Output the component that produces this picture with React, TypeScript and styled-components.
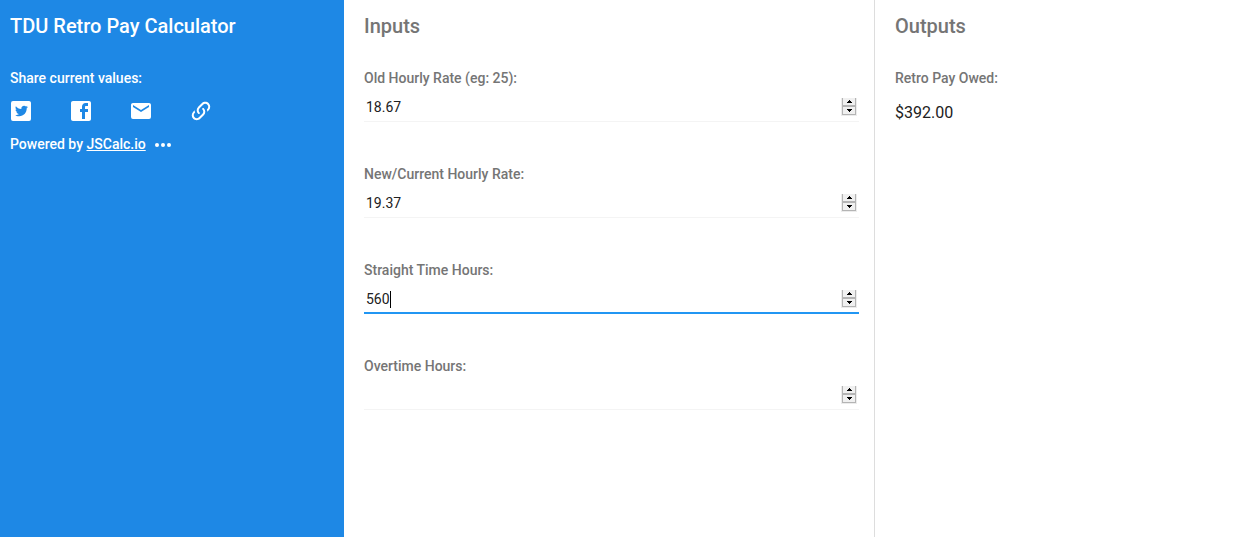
import React, { useId, useState } from "react";
import styled, { createGlobalStyle } from "styled-components";

const GlobalStyle = createGlobalStyle`
  *, *::before, *::after { box-sizing: border-box; }
  body {
    margin: 0;
    background: #fff;
    color: #212121;
    font-family: Roboto, "Liberation Sans", sans-serif;
    font-size: 14px;
    line-height: 20px;
  }
`;

const Page = styled.main`
  display: grid;
  grid-template-columns: 344fr 531fr 374fr;
  min-height: 100vh;
`;

const Sidebar = styled.aside`
  padding: 10px;
  background: #1e88e5;
  color: #fff;
`;

const InputsPanel = styled.section`
  padding: 10px 15px 10px 20px;
  border-right: 1px solid #ddd;
`;

const OutputsPanel = styled.section`
  padding: 10px 20px;
`;

const Heading = styled.h2`
  margin: 0 0 26px;
  font-size: 20px;
  font-weight: 500;
  line-height: 32px;
  color: #757575;
`;

const Title = styled(Heading).attrs({ as: "h1" })`
  color: inherit;
`;

const Strong = styled.p`
  margin: 0;
  font-weight: 500;
`;

const ShareRow = styled.div`
  display: flex;
  gap: 36px;
  margin: 11px 0 9px -1px;
`;

const IconButton = styled.button`
  display: flex;
  padding: 0;
  border: 0;
  background: none;
  color: inherit;
  cursor: pointer;

  svg {
    width: 24px;
    height: 24px;
    fill: currentColor;
  }
`;

const Footer = styled.div`
  display: flex;
  align-items: center;
  gap: 6px;
  font-weight: 500;
`;

const Link = styled.a`
  color: inherit;
`;

const Fields = styled.form`
  display: grid;
  gap: 42px;
`;

const Label = styled.label`
  display: block;
  font-weight: 500;
  color: #757575;
`;

const Control = styled.div<{ $focused: boolean }>`
  position: relative;
  display: flex;
  align-items: center;
  height: 34px;
  padding: 6px 2px ${(p) => (p.$focused ? "0" : "1px")} 0;
  border-bottom: ${(p) => (p.$focused ? "2px solid #2196f3" : "1px solid #f4f4f4")};
`;

const NumberInput = styled.input`
  flex: 1;
  min-width: 0;
  height: 20px;
  padding: 0 2px;
  border: 0;
  outline: 0;
  background: none;
  color: #212121;
  caret-color: transparent;
  font: inherit;
  appearance: textfield;

  &::-webkit-inner-spin-button,
  &::-webkit-outer-spin-button {
    appearance: none;
    margin: 0;
  }
`;

const Caret = styled.span`
  position: absolute;
  top: 11px;
  width: 1px;
  height: 17px;
  background: #000;
  pointer-events: none;
`;

const Spinner = styled.div`
  display: grid;
  grid-template-rows: 1fr 1fr;
  gap: 2px;
  width: 16px;
  height: 18px;
  background: #b4b4b4;
  border: solid #ececec;
  border-width: 0 1px 1px;
  padding: 0 1px 1px;
`;

const Step = styled.button`
  display: flex;
  align-items: center;
  justify-content: center;
  padding: 0;
  border: 0;
  background: #f0f0f0;

  svg {
    width: 5px;
    height: 3px;
    fill: #000;
  }
`;

const Result = styled.output`
  display: block;
  margin-top: 15px;
  font-size: 16px;
`;

const shareIcons = [
  {
    name: "Share on Twitter",
    d: "M17.71,9.33C17.64,13.95 14.69,17.11 10.28,17.31C8.46,17.39 7.15,16.81 6,16.08C7.34,16.29 9,15.76 9.9,15C8.58,14.86 7.81,14.19 7.44,13.12C7.82,13.18 8.22,13.16 8.58,13.09C7.39,12.69 6.54,11.95 6.5,10.41C6.83,10.57 7.18,10.71 7.64,10.74C6.75,10.23 6.1,8.38 6.85,7.16C8.17,8.61 9.76,9.79 12.37,9.95C11.71,7.15 15.42,5.63 16.97,7.5C17.63,7.38 18.16,7.14 18.68,6.86C18.47,7.5 18.06,7.97 17.56,8.33C18.1,8.26 18.59,8.13 19,7.92C18.75,8.45 18.19,8.93 17.71,9.33M20,2H4A2,2 0 0,0 2,4V20A2,2 0 0,0 4,22H20A2,2 0 0,0 22,20V4C22,2.89 21.1,2 20,2Z",
  },
  {
    name: "Share on Facebook",
    d: "M20 2H4C2.9 2 2 2.9 2 4v16c0 1.1.9 2 2 2h16c1.1 0 2-.9 2-2V4c0-1.1-.9-2-2-2zm-1 2v3h-2c-.6 0-1 .4-1 1v2h3v3h-3v7h-3v-7h-2v-3h2V7.500C13 5.600 14.600 4 16.500 4H19z",
  },
  {
    name: "Share by email",
    d: "M20,8L12,13L4,8V6L12,11L20,6M20,4H4C2.89,4 2,4.89 2,6V18A2,2 0 0,0 4,20H20A2,2 0 0,0 22,18V6C22,4.89 21.1,4 20,4Z",
  },
  {
    name: "Copy link",
    d: "M10.59,13.41C11,13.8 11,14.44 10.59,14.83C10.2,15.22 9.56,15.22 9.17,14.83C7.22,12.88 7.22,9.71 9.17,7.76V7.76L12.71,4.22C14.66,2.27 17.83,2.27 19.78,4.22C21.73,6.17 21.73,9.34 19.78,11.29L18.29,12.78C18.3,11.96 18.17,11.14 17.89,10.36L18.36,9.88C19.54,8.71 19.54,6.81 18.36,5.64C17.19,4.46 15.29,4.46 14.12,5.64L10.59,9.17C9.41,10.34 9.41,12.24 10.59,13.41M13.41,9.17C13.8,8.78 14.44,8.78 14.83,9.17C16.78,11.12 16.78,14.29 14.83,16.24V16.24L11.29,19.78C9.34,21.73 6.17,21.73 4.22,19.78C2.27,17.83 2.27,14.66 4.22,12.71L5.71,11.22C5.7,12.04 5.83,12.86 6.11,13.65L5.64,14.12C4.46,15.29 4.46,17.19 5.64,18.36C6.81,19.54 8.71,19.54 9.88,18.36L13.41,14.83C14.59,13.66 14.59,11.76 13.41,10.59C13,10.2 13,9.56 13.41,9.17Z",
  },
];

interface FieldProps {
  label: string;
  value: string;
  active: boolean;
  onActivate: () => void;
  onChange: (value: string) => void;
}

function Field({ label, value, active, onActivate, onChange }: FieldProps) {
  const id = useId();
  const step = (by: number) => onChange(String(Number(value) + by));
  return (
    <div>
      <Label htmlFor={id}>{label}</Label>
      <Control $focused={active}>
        <NumberInput
          id={id}
          type="number"
          step="any"
          value={value}
          onFocus={onActivate}
          onChange={(e) => onChange(e.target.value)}
        />
        {active && <Caret style={{ left: `calc(${value.length}ch + 2px)` }} />}
        <Spinner>
          <Step type="button" aria-label={`Increase ${label}`} onClick={() => step(1)}>
            <svg viewBox="0 0 5 3"><path d="M2 0h1v1h1v1h1v1H0V2h1V1h1z" /></svg>
          </Step>
          <Step type="button" aria-label={`Decrease ${label}`} onClick={() => step(-1)}>
            <svg viewBox="0 0 5 3"><path d="M0 0h5v1H4v1H3v1H2V2H1V1H0z" /></svg>
          </Step>
        </Spinner>
      </Control>
    </div>
  );
}

const labels = [
  "Old Hourly Rate (eg: 25):",
  "New/Current Hourly Rate:",
  "Straight Time Hours:",
  "Overtime Hours:",
];

export default function App() {
  const [values, setValues] = useState(["18.67", "19.37", "560", ""]);
  const [active, setActive] = useState(2);
  const [oldRate, newRate, straight, overtime] = values.map(Number);
  const owed = (newRate - oldRate) * (straight + overtime * 1.5);

  return (
    <>
      <GlobalStyle />
      <Page>
        <Sidebar>
          <Title>TDU Retro Pay Calculator</Title>
          <Strong>Share current values:</Strong>
          <ShareRow>
            {shareIcons.map((icon) => (
              <IconButton key={icon.name} type="button" aria-label={icon.name}>
                <svg viewBox="0 0 24 24"><path d={icon.d} /></svg>
              </IconButton>
            ))}
          </ShareRow>
          <Footer>
            <span>Powered by <Link href="#jscalc">JSCalc.io</Link></span>
            <IconButton type="button" aria-label="More">
              <svg viewBox="0 0 24 24">
                <circle cx="5" cy="13" r="2" />
                <circle cx="11" cy="13" r="2" />
                <circle cx="17" cy="13" r="2" />
              </svg>
            </IconButton>
          </Footer>
        </Sidebar>
        <InputsPanel>
          <Heading>Inputs</Heading>
          <Fields>
            {labels.map((label, i) => (
              <Field
                key={label}
                label={label}
                value={values[i]}
                active={active === i}
                onActivate={() => setActive(i)}
                onChange={(next) => setValues(values.map((v, j) => (j === i ? next : v)))}
              />
            ))}
          </Fields>
        </InputsPanel>
        <OutputsPanel>
          <Heading>Outputs</Heading>
          <Label as="div">Retro Pay Owed:</Label>
          <Result>${owed.toFixed(2)}</Result>
        </OutputsPanel>
      </Page>
    </>
  );
}
